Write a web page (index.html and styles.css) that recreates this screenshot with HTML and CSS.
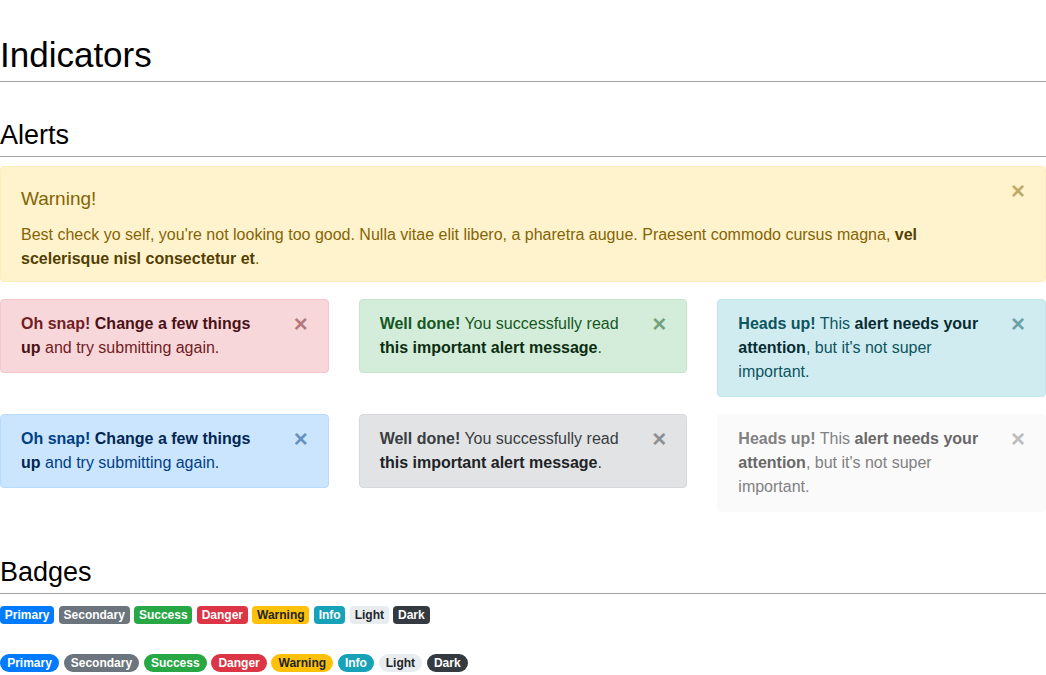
FILE: index.html
```html
<!DOCTYPE html>
<html lang="en">
<head>
<meta charset="utf-8">
<title>Indicators</title>
<link rel="stylesheet" href="styles.css">
</head>
<body>
<h1 class="page-title">Indicators</h1>

<h2 class="section-title section-alerts">Alerts</h2>

<div class="alert alert-warning alert-wide">
  <button type="button" class="close">&times;</button>
  <h4 class="alert-heading">Warning!</h4>
  <p class="alert-text">Best check yo self, you're not looking too good. Nulla vitae elit libero, a pharetra augue. Praesent commodo cursus magna, <a href="#" class="alert-link">vel scelerisque nisl consectetur et</a>.</p>
</div>

<div class="alert-grid">
  <div class="alert alert-danger">
    <button type="button" class="close">&times;</button>
    <strong>Oh snap!</strong> <a href="#" class="alert-link">Change a few things up</a> and try submitting again.
  </div>
  <div class="alert alert-success">
    <button type="button" class="close">&times;</button>
    <strong>Well done!</strong> You successfully read <a href="#" class="alert-link">this important alert message</a>.
  </div>
  <div class="alert alert-info">
    <button type="button" class="close">&times;</button>
    <strong>Heads up!</strong> This <a href="#" class="alert-link">alert needs your attention</a>, but it's not super important.
  </div>
</div>

<div class="alert-grid">
  <div class="alert alert-primary">
    <button type="button" class="close">&times;</button>
    <strong>Oh snap!</strong> <a href="#" class="alert-link">Change a few things up</a> and try submitting again.
  </div>
  <div class="alert alert-secondary">
    <button type="button" class="close">&times;</button>
    <strong>Well done!</strong> You successfully read <a href="#" class="alert-link">this important alert message</a>.
  </div>
  <div class="alert alert-light">
    <button type="button" class="close">&times;</button>
    <strong>Heads up!</strong> This <a href="#" class="alert-link">alert needs your attention</a>, but it's not super important.
  </div>
</div>

<h2 class="section-title section-badges">Badges</h2>

<div class="badge-row">
  <span class="badge badge-primary">Primary</span>
  <span class="badge badge-secondary">Secondary</span>
  <span class="badge badge-success">Success</span>
  <span class="badge badge-danger">Danger</span>
  <span class="badge badge-warning">Warning</span>
  <span class="badge badge-info">Info</span>
  <span class="badge badge-light">Light</span>
  <span class="badge badge-dark">Dark</span>
</div>

<div class="badge-row badge-row-pill">
  <span class="badge badge-pill badge-primary">Primary</span>
  <span class="badge badge-pill badge-secondary">Secondary</span>
  <span class="badge badge-pill badge-success">Success</span>
  <span class="badge badge-pill badge-danger">Danger</span>
  <span class="badge badge-pill badge-warning">Warning</span>
  <span class="badge badge-pill badge-info">Info</span>
  <span class="badge badge-pill badge-light">Light</span>
  <span class="badge badge-pill badge-dark">Dark</span>
</div>
</body>
</html>
```

FILE: styles.css
```css
html, body {
  margin: 0;
  padding: 0;
  background: #fff;
}

body {
  font-family: "Liberation Sans", Arial, Helvetica, sans-serif;
  font-size: 16px;
  line-height: 1.5;
  color: #212529;
}

.page-title {
  margin: 34px 0 0;
  padding: 0 0 5px;
  font-size: 35px;
  font-weight: 400;
  line-height: 42px;
  color: #000;
  border-bottom: 1px solid #a2a2a8;
}

.section-title {
  margin: 0;
  padding: 0 0 5px;
  font-size: 27px;
  font-weight: 400;
  line-height: 32px;
  color: #000;
  border-bottom: 1px solid #a2a2a8;
}

.section-alerts {
  margin-top: 37px;
  margin-bottom: 9px;
}

.section-badges {
  margin-top: 27px;
  margin-bottom: 12px;
}

/* Alerts */
.alert {
  position: relative;
  padding: 12px 64px 12px 20px;
  margin-bottom: 17px;
  border: 1px solid transparent;
  border-radius: 4px;
}

.alert-wide {
  padding-bottom: 10px;
}

.alert-heading {
  margin: 8px 0 13px;
  font-size: 19px;
  font-weight: 400;
  line-height: 23px;
  color: inherit;
}

.alert-text {
  margin: 0;
}

.alert strong,
.alert-link {
  font-weight: 700;
}

.alert-link {
  text-decoration: none;
}

.close {
  position: absolute;
  top: 0;
  right: 0;
  padding: 12px 20px;
  margin: 0;
  background: transparent;
  border: 0;
  font-family: "Liberation Sans", Arial, sans-serif;
  font-size: 24px;
  font-weight: 700;
  line-height: 1;
  color: inherit;
  opacity: 0.5;
  cursor: pointer;
}

.alert-grid {
  display: grid;
  grid-template-columns: repeat(3, 1fr);
  column-gap: 30px;
  align-items: start;
}

.alert-warning {
  color: #856404;
  background: #fff3cd;
  border-color: #ffeeba;
}
.alert-warning .alert-link { color: #533f03; }

.alert-danger {
  color: #721c24;
  background: #f8d7da;
  border-color: #f5c6cb;
}
.alert-danger .alert-link { color: #491217; }

.alert-success {
  color: #155724;
  background: #d4edda;
  border-color: #c3e6cb;
}
.alert-success .alert-link { color: #0b2e13; }

.alert-info {
  color: #0c5460;
  background: #d1ecf1;
  border-color: #bee5eb;
}
.alert-info .alert-link { color: #062c33; }

.alert-primary {
  color: #004085;
  background: #cce5ff;
  border-color: #b8daff;
}
.alert-primary .alert-link { color: #002752; }

.alert-secondary {
  color: #383d41;
  background: #e2e3e5;
  border-color: #d6d8db;
}
.alert-secondary .alert-link { color: #202326; }

.alert-light {
  color: #818182;
  background: #fafafa;
  border-color: #fafafa;
}
.alert-light .alert-link { color: #686868; }

/* Badges */
.badge-row {
  display: flex;
  flex-wrap: wrap;
  gap: 4.45px;
  align-items: flex-start;
}

.badge-row-pill {
  margin-top: 30px;
}

.badge {
  display: inline-block;
  padding: 3px 4.8px;
  font-size: 12px;
  font-weight: 700;
  line-height: 1;
  text-align: center;
  white-space: nowrap;
  border-radius: 4px;
  color: #fff;
}

.badge-pill {
  padding-left: 7.2px;
  padding-right: 7.2px;
  border-radius: 10rem;
}

.badge-primary { background: #007bff; }
.badge-secondary { background: #6c757d; }
.badge-success { background: #28a745; }
.badge-danger { background: #dc3545; }
.badge-warning { background: #ffc107; color: #212529; }
.badge-info { background: #17a2b8; }
.badge-light { background: #e9ecef; color: #212529; }
.badge-dark { background: #343a40; }
```
